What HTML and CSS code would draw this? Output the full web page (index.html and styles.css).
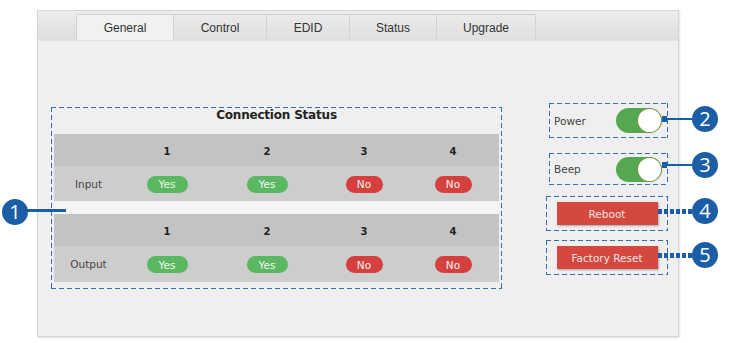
FILE: index.html
```html
<!DOCTYPE html>
<html>
<head>
<meta charset="utf-8">
<link rel="stylesheet" href="styles.css">
</head>
<body>
<div class="page">
  <div class="panel">
    <div class="tabbar">
      <div class="tab active w-general">General</div>
      <div class="tab w-control">Control</div>
      <div class="tab w-edid">EDID</div>
      <div class="tab w-status">Status</div>
      <div class="tab w-upgrade">Upgrade</div>
    </div>
    <div class="content">
      <div class="status-box dashed">
        <div class="status-title">Connection Status</div>
        <div class="grid head">
          <span></span><span>1</span><span>2</span><span>3</span><span>4</span>
        </div>
        <div class="grid row">
          <span class="label">Input</span>
          <span><i class="pill yes">Yes</i></span>
          <span><i class="pill yes">Yes</i></span>
          <span><i class="pill no">No</i></span>
          <span><i class="pill no">No</i></span>
        </div>
        <div class="gap"></div>
        <div class="grid head">
          <span></span><span>1</span><span>2</span><span>3</span><span>4</span>
        </div>
        <div class="grid row tall">
          <span class="label">Output</span>
          <span><i class="pill yes">Yes</i></span>
          <span><i class="pill yes">Yes</i></span>
          <span><i class="pill no">No</i></span>
          <span><i class="pill no">No</i></span>
        </div>
      </div>
      <div class="side">
        <div class="opt dashed opt-power">
          <span class="opt-label">Power</span>
          <span class="toggle"><span class="knob"></span></span>
        </div>
        <div class="opt dashed opt-beep">
          <span class="opt-label">Beep</span>
          <span class="toggle"><span class="knob"></span></span>
        </div>
        <div class="opt dashed opt-btn opt-reboot">
          <span class="btn">Reboot</span>
        </div>
        <div class="opt dashed opt-btn opt-factory">
          <span class="btn">Factory Reset</span>
        </div>
      </div>
    </div>
  </div>

  <div class="callout c1"><span class="num">1</span></div>
  <div class="leader l1"></div>
  <div class="callout c2"><span class="num">2</span></div>
  <div class="leader thin l2"></div>
  <div class="callout c3"><span class="num">3</span></div>
  <div class="leader thin l3"></div>
  <div class="callout c4"><span class="num">4</span></div>
  <div class="leader dots l4"></div>
  <div class="callout c5"><span class="num">5</span></div>
  <div class="leader dots l5"></div>
</div>
</body>
</html>
```

FILE: styles.css
```css
* { box-sizing: border-box; }
html, body { margin: 0; padding: 0; background: #ffffff; }
body { font-family: "Liberation Sans", Arial, sans-serif; width: 729px; height: 343px; overflow: hidden; }

.page { position: relative; padding: 10px 0 0 37px; height: 343px; }

.panel {
  width: 642px;
  height: 327px;
  background: #efefef;
  border: 1px solid #d6d6d6;
  box-shadow: 1px 1px 2px rgba(0,0,0,0.12);
  display: flex;
  flex-direction: column;
}

.tabbar {
  height: 30px;
  display: flex;
  align-items: flex-end;
  padding-left: 38px;
  background: linear-gradient(#ececec, #dedede);
  border-bottom: 1px solid #e2e2e2;
}
.tab {
  height: 26px;
  display: flex;
  align-items: center;
  justify-content: center;
  font-size: 12px;
  color: #333;
  background: linear-gradient(#eaeaea, #e0e0e0);
  border: 1px solid #d2d2d2;
  border-bottom: none;
  margin-right: -1px;
}
.tab.active { background: #f1f1f1; }
.w-general { width: 98px; }
.w-control { width: 94px; }
.w-edid { width: 84px; }
.w-status { width: 88px; }
.w-upgrade { width: 100px; }

.content { display: flex; align-items: flex-start; flex: 1; }

.dashed {
  background-image:
    repeating-linear-gradient(90deg, #2f70b6 0 5px, transparent 5px 8px),
    repeating-linear-gradient(90deg, #2f70b6 0 5px, transparent 5px 8px),
    repeating-linear-gradient(180deg, #2f70b6 0 5px, transparent 5px 8px),
    repeating-linear-gradient(180deg, #2f70b6 0 5px, transparent 5px 8px);
  background-size: 100% 1px, 100% 1px, 1px 100%, 1px 100%;
  background-position: left top, left bottom, left top, right top;
  background-repeat: no-repeat;
}

.status-box {
  margin: 66px 0 0 13px;
  width: 451px;
  height: 182px;
  padding: 1px 3px;
  display: flex;
  flex-direction: column;
}
.status-title {
  height: 26px;
  font-family: "DejaVu Sans", Verdana, sans-serif;
  font-weight: bold;
  font-size: 12px;
  letter-spacing: -0.2px;
  color: #222;
  text-align: center;
  line-height: 14px;
}
.grid {
  display: grid;
  grid-template-columns: 66px 94px 106px 88px 90px;
  align-items: center;
  justify-items: center;
}
.head {
  height: 32px;
  background: #c3c3c3;
  font-family: "DejaVu Sans", Verdana, sans-serif;
  font-weight: bold;
  font-size: 10px;
  color: #222;
  padding-top: 3px;
}
.row {
  height: 35px;
  background: #cdcdcd;
}
.row.tall { height: 36px; }
.gap { height: 13px; background: #f5f5f5; }
.label {
  font-family: "DejaVu Sans", Tahoma, sans-serif;
  font-size: 10.5px;
  color: #4a4545;
  padding-left: 3px;
}
.pill {
  font-style: normal;
  display: inline-flex;
  align-items: center;
  justify-content: center;
  height: 17px;
  border-radius: 9px;
  color: #f4f4f4;
  font-family: "DejaVu Sans", Tahoma, sans-serif;
  font-size: 10.5px;
}
.pill.yes { width: 41px; background: #5bb862; }
.pill.no { width: 37px; background: #d5403e; }

.side { display: flex; flex-direction: column; margin-top: 62px; margin-left: 44px; }
.opt {
  display: flex;
  align-items: center;
  justify-content: space-between;
}
.opt-power { width: 119px; height: 35px; margin-left: 3px; padding: 0 6px 0 5px; }
.opt-beep { width: 119px; height: 32px; margin-left: 3px; margin-top: 15px; padding: 0 6px 0 5px; }
.opt-btn { width: 122px; justify-content: center; }
.opt-reboot { height: 35px; margin-top: 11px; }
.opt-factory { height: 35px; margin-top: 9px; }
.opt-label {
  font-family: "DejaVu Sans", Tahoma, sans-serif;
  font-size: 10.5px;
  color: #444;
}
.toggle {
  width: 46px;
  height: 25px;
  border-radius: 13px;
  background: #54a84f;
  display: flex;
  align-items: center;
  justify-content: flex-end;
  padding-right: 1px;
}
.knob {
  width: 23px;
  height: 23px;
  border-radius: 50%;
  background: #ffffff;
  box-shadow: 0 0 1px 1px rgba(160,130,60,0.45);
}
.btn {
  width: 101px;
  height: 23px;
  background: #d5483f;
  color: #f4e4e0;
  font-family: "DejaVu Sans", Tahoma, sans-serif;
  font-size: 10.5px;
  display: flex;
  align-items: center;
  justify-content: center;
  box-shadow: 1px 1px 2px rgba(0,0,0,0.3);
}

/* annotation callouts (overlay) */
.callout {
  position: absolute;
  width: 26px;
  height: 26px;
  border-radius: 50%;
  background: #1c5ea6;
  display: flex;
  align-items: center;
  justify-content: center;
}
.num {
  color: #ffffff;
  font-family: "Open Sans", "DejaVu Sans", sans-serif;
  font-size: 20px;
  line-height: 1;
}
.c1 { left: 2px; top: 199px; }
.c2 { left: 692px; top: 106px; }
.c3 { left: 692px; top: 152px; }
.c4 { left: 692px; top: 198px; }
.c5 { left: 692px; top: 242px; }
.leader { position: absolute; }
.l1 { left: 26px; top: 209px; width: 40px; height: 3px; background: #1c5ea6; }
.thin { height: 2px; background: #1c5ea6; width: 30px; }
.thin::before {
  content: "";
  position: absolute;
  left: -5px;
  top: -2px;
  width: 5px;
  height: 6px;
  background: #1c5ea6;
}
.l2 { left: 667px; top: 118px; }
.l3 { left: 667px; top: 164px; }
.dots {
  height: 5px;
  width: 36px;
  background: repeating-linear-gradient(90deg, #1c5ea6 0 4px, transparent 4px 6px);
}
.l4 { left: 658px; top: 209px; }
.l5 { left: 658px; top: 253px; }
```
